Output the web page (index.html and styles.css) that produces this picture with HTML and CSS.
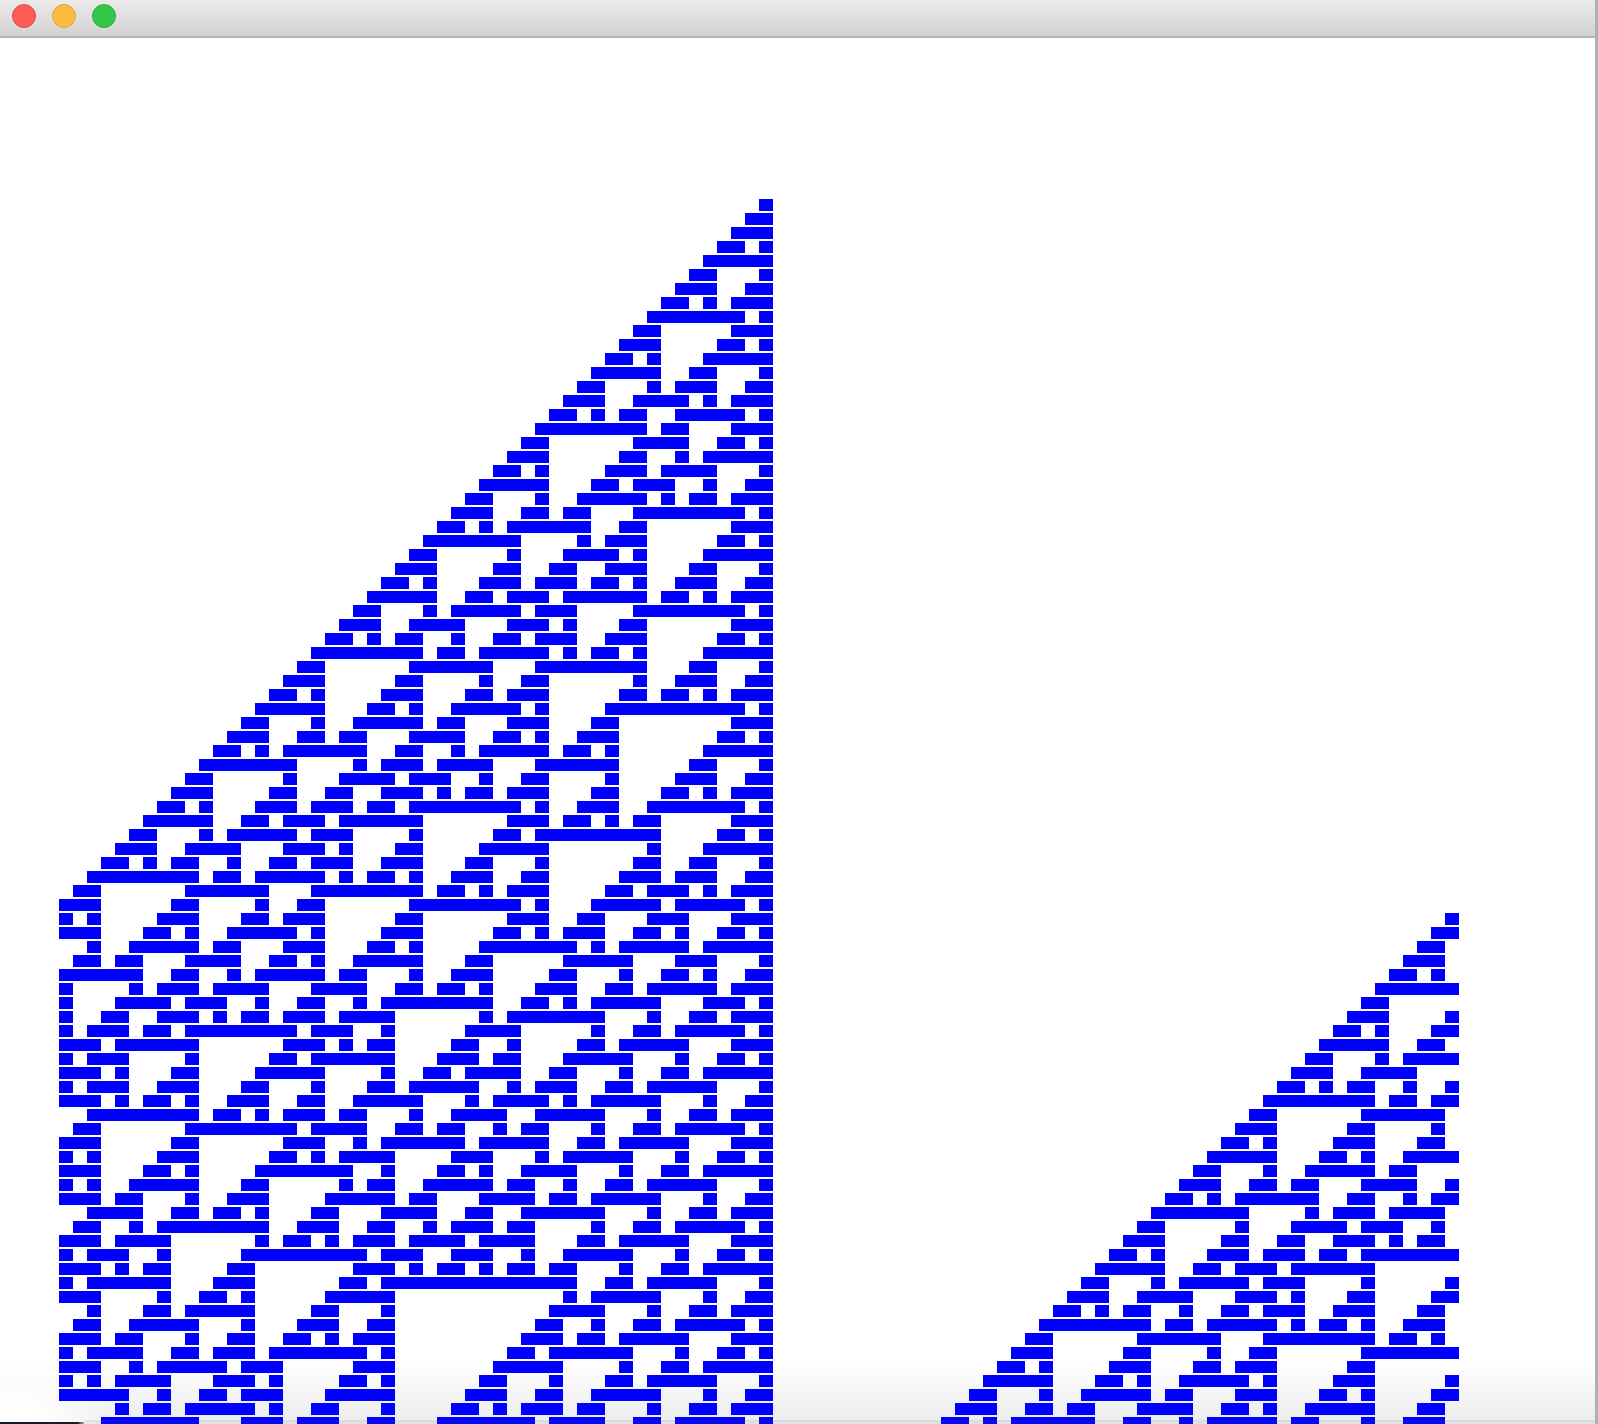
FILE: index.html
```html
<!DOCTYPE html>
<html lang="en">
<head>
<meta charset="utf-8">
<title>Rule 110</title>
<link rel="stylesheet" href="styles.css">
</head>
<body>
<div class="window">
  <header class="titlebar">
    <span class="light light-close"></span>
    <span class="light light-min"></span>
    <span class="light light-max"></span>
  </header>
  <main class="canvas">
    <div class="automaton" id="automaton"></div>
  </main>
  <div class="bottom-edge"></div>
  <div class="corner-left"></div>
  <div class="corner-right"></div>
</div>
<script src="script.js"></script>
</body>
</html>
```

FILE: styles.css
```css
html, body {
  margin: 0;
  height: 100%;
  background: #fff;
  overflow: hidden;
}
.window {
  position: relative;
  width: 1598px;
  height: 1424px;
  overflow: hidden;
  box-sizing: border-box;
  border-right: 3px solid #b0b0b0;
  background:
    radial-gradient(ellipse 130px 70px at 0 100%, rgba(255,255,255,1) 30%, rgba(255,255,255,0) 100%),
    linear-gradient(#fff 1364px, #ececec 1420px);
}
.titlebar {
  display: flex;
  align-items: center;
  gap: 16px;
  box-sizing: border-box;
  height: 38px;
  padding: 0 0 4px 12px;
  background: linear-gradient(#ebebeb, #d2d2d2);
  border-bottom: 2px solid #b4b4b4;
}
.light {
  box-sizing: border-box;
  width: 24px;
  height: 24px;
  border-radius: 50%;
  border: 1px solid;
}
.light-close { background: #fc5b57; border-color: #e24a46; }
.light-min { background: #fdbc40; border-color: #e0a63a; }
.light-max { background: #33c748; border-color: #2bac3d; }
.canvas {
  padding: 161px 0 0 59px;
}
.automaton {
  display: grid;
  grid-template-columns: repeat(100, 14px);
  grid-auto-rows: 12px;
  row-gap: 2px;
  width: 1400px;
}
.cell-on { background: #0000ff; }
.bottom-edge {
  position: absolute;
  left: 84px;
  right: 0;
  bottom: 0;
  height: 4px;
  background: linear-gradient(rgba(100,100,100,0.14), rgba(100,100,100,0.07));
}
.corner-left {
  position: absolute;
  left: 0;
  bottom: 0;
  width: 84px;
  height: 2px;
  background: linear-gradient(90deg, #0d1a2a, #14202c 92%, #a8a8a8);
}
.corner-right {
  position: absolute;
  right: -3px;
  bottom: 0;
  width: 3px;
  height: 4px;
  background: #111;
}
```

FILE: script.js
```js
var COLS = 100, ROWS = 88, RULE = 110;
var row = [];
for (var i = 0; i < COLS; i++) row.push(i === 50 ? 1 : 0);
var host = document.getElementById('automaton');
var frag = document.createDocumentFragment();
for (var r = 0; r < ROWS; r++) {
  var next = [];
  for (var c = 0; c < COLS; c++) {
    var cell = document.createElement('div');
    if (row[c]) cell.className = 'cell-on';
    frag.appendChild(cell);
    var idx = row[(c + COLS - 1) % COLS] * 4 + row[c] * 2 + row[(c + 1) % COLS];
    next.push((RULE >> idx) & 1);
  }
  row = next;
}
host.appendChild(frag);
```
